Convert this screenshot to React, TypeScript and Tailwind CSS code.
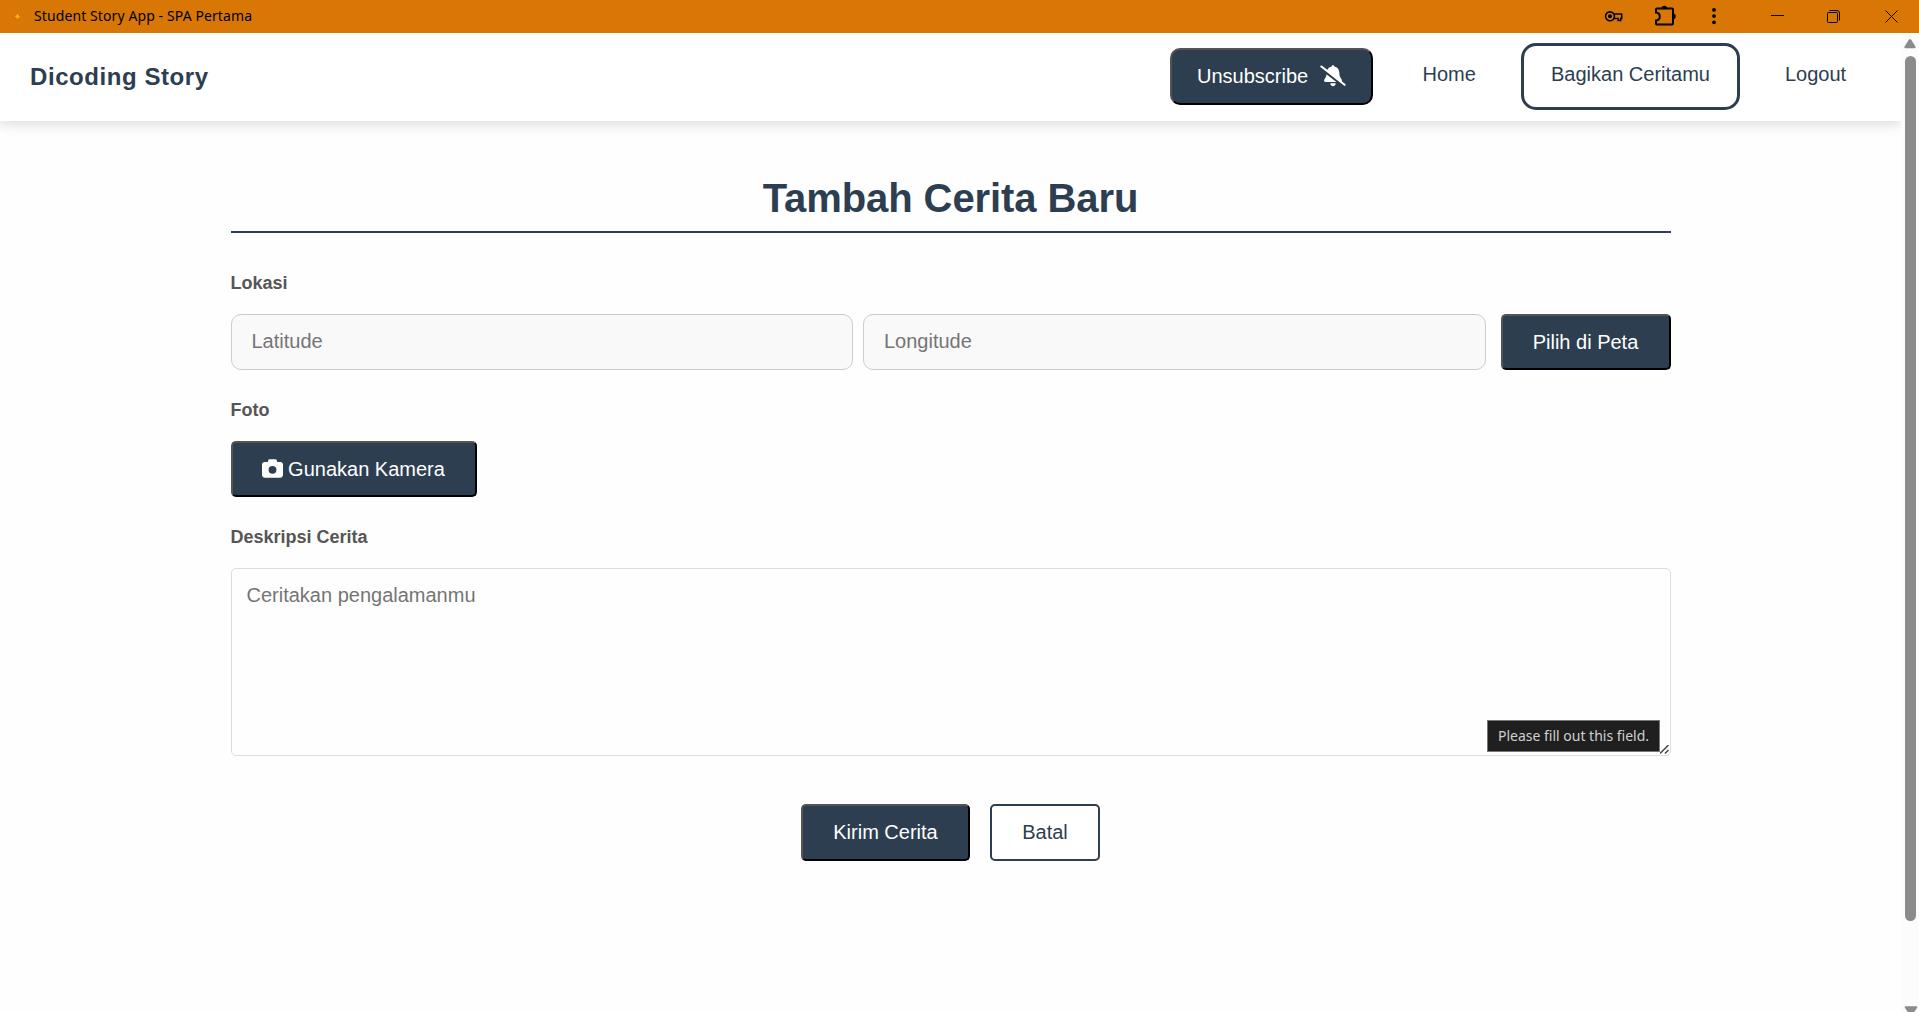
import React from "react";
import { FaCamera } from "react-icons/fa6";

const outset =
  "border-2 border-t-[#545454] border-l-[#545454] border-r-black border-b-black bg-[#2c3e50] text-white";

function TitleBar() {
  return (
    <div className="flex h-[33px] shrink-0 items-center bg-[#d87706] font-['Noto_Sans'] text-black">
      <svg className="ml-[9px] h-[17px] w-[17px]" viewBox="0 0 17 17">
        <circle cx="8.5" cy="8.5" r="7.5" fill="none" stroke="#e08310" strokeOpacity="0.6" strokeDasharray="3 2" />
        <path d="M8.500 6.300l.7 1.500 1.500.7-1.500.7-.7 1.500-.7-1.500-1.500-.7 1.500-.7z" fill="#fdb913" stroke="#fdb913" strokeWidth=".8" />
      </svg>
      <span className="ml-[8px] inline-block w-[219px] whitespace-nowrap pb-[2px] text-[14px] leading-[31px] tracking-[0.1px]">
        Student Story App - SPA Pertama
      </span>
      <svg className="ml-auto h-[33px] w-[315px]" viewBox="1604 0 315 33" fill="none" stroke="#000">
        <circle cx="1610" cy="16.3" r="4.4" strokeWidth="1.6" />
        <circle cx="1610" cy="16.3" r="2" fill="#000" stroke="none" />
        <path d="M1614 14.1h7.7v4.4h-1v2h-2.600v-2h-4.100" strokeWidth="1.500" />
        <path
          d="M1657.500 8.500H1672q1 0 1 1V23.500q0 1-1 1H1657q-1 0-1-1V20.500c5-.5 5-7.500 0-8V9.500q0-1 1-1z"
          strokeWidth="2"
        />
        <path d="M1661.500 8.500a2.800 2.800 0 0 1 5.600 0zM1673 13.500a2.800 2.800 0 0 1 0 5.600z" fill="#000" stroke="none" />
        <g fill="#000" stroke="none">
          <circle cx="1714" cy="9.900" r="1.900" />
          <circle cx="1714" cy="16.100" r="1.900" />
          <circle cx="1714" cy="22.300" r="1.900" />
        </g>
        <path d="M1771 15.500h13" />
        <rect x="1827.500" y="12.500" width="10" height="10" rx="1" />
        <path d="M1829.500 10.500h7.500q2.500 0 2.500 2.500v7.500" />
        <path d="M1885.500 10.500l12 12M1897.500 10.500l-12 12" />
      </svg>
    </div>
  );
}

function BellSlash() {
  return (
    <svg className="h-[22px] w-[26px]" viewBox="0 0 26 22" fill="#fff" strokeLinecap="round">
      <path d="M13 .3c.9 0 1.300.5 1.300 1.300 3 .6 5 3 5 6 0 3.400.9 4.900 2.200 6.700.9 1.300.3 2.700-1 2.700H5.500c-1.300 0-1.900-1.400-1-2.700 1.300-1.800 2.200-3.300 2.200-6.700 0-3 2-5.400 5-6 0-.8.4-1.300 1.300-1.300z" />
      <path d="M10.300 18.300h5.400c0 1.700-1.100 2.900-2.700 2.900s-2.700-1.200-2.700-2.900z" />
      <path d="M.5 3L23.500 21" stroke="#2c3e50" strokeWidth="2.400" />
      <path d="M1.400 1.500L24.600 19.800" stroke="#fff" strokeWidth="2.100" />
    </svg>
  );
}

function Header() {
  return (
    <header className="relative flex h-[88px] shrink-0 items-start bg-white pl-[30px] pr-[25px] text-[#2c3e50] shadow-[0_4px_12px_rgba(0,0,0,0.13)]">
      <div className="mt-[26px] text-[24px] leading-[36px] font-bold tracking-[0.57px]">Dicoding Story</div>
      <nav className="ml-auto flex items-start text-[20px] whitespace-nowrap">
        <button className={`${outset} mt-[15px] flex h-[57px] w-[203px] items-center rounded-[10px] pb-[2px] pl-[25px]`}>
          <span className="w-[123px] text-left">Unsubscribe</span>
          <BellSlash />
        </button>
        <a className="mt-[26px] ml-[49.5px] w-[54px] leading-[30px]">Home</a>
        <a className="mt-[10px] ml-[44.5px] h-[67px] w-[219px] rounded-[15px] border-3 border-[#2c3e50] pt-[13px] text-center leading-[30px]">
          Bagikan Ceritamu
        </a>
        <a className="mt-[26px] ml-[45px] w-[91px] leading-[30px]">Logout</a>
      </nav>
    </header>
  );
}

function Label({ children }: { children: React.ReactNode }) {
  return <label className="block h-[27px] pt-px text-[18px] leading-[27px] font-bold text-[#555]">{children}</label>;
}

const coordinate =
  "h-[56px] min-w-0 flex-1 rounded-[10px] border border-[#ccc] bg-[#f9f9f9] px-[20px] pb-[2px] placeholder:text-[#757575]";

function StoryForm() {
  return (
    <main className="mx-auto w-[1440px] text-[20px]">
      <h1 className="mt-[47px] h-[65px] border-b-2 border-[#2c3e50] text-center text-[40px] leading-[61px] font-bold tracking-[-0.08px] text-[#2c3e50]">
        Tambah Cerita Baru
      </h1>
      <div className="mt-[36px]">
        <Label>Lokasi</Label>
        <div className="mt-[18px] flex">
          <input className={coordinate} placeholder="Latitude" />
          <input className={`${coordinate} ml-[10px]`} placeholder="Longitude" />
          <button className={`${outset} ml-[15px] h-[56px] w-[170px] rounded-[5px]`}>Pilih di Peta</button>
        </div>
      </div>
      <div className="mt-[26px]">
        <Label>Foto</Label>
        <button className={`${outset} mt-[18px] flex h-[56px] w-[246px] items-center justify-center gap-[5px] rounded-[5px]`}>
          <FaCamera className="mb-px h-[21px] w-[21px]" />
          Gunakan Kamera
        </button>
      </div>
      <div className="mt-[26px]">
        <Label>Deskripsi Cerita</Label>
        <div className="relative mt-[18px] h-[188px]">
          <textarea
            className="block h-full w-full resize-none rounded-[5px] border border-[#ddd] px-[15px] py-[15px] leading-[23px] placeholder:text-[#757575]"
            placeholder="Ceritakan pengalamanmu"
          />
          <svg className="absolute right-[2px] bottom-[2px] h-[9px] w-[9px]" viewBox="0 0 9 9" stroke="#444" strokeWidth="1.500">
            <path d="M0 8.500L8.500 0M5 8.500L8.500 5" />
          </svg>
          <div className="absolute right-[10.5px] bottom-[4px] h-[32px] w-[173px] border border-[#767676] bg-[#1f1f1f] text-center font-['Noto_Sans'] text-[14px] leading-[29px] whitespace-nowrap text-[#d0d0d0]">
            Please fill out this field.
          </div>
        </div>
      </div>
      <div className="mt-[48px] flex justify-center gap-[20px]">
        <button className={`${outset} h-[57px] w-[169px] rounded-[5px] pb-[2px]`}>Kirim Cerita</button>
        <button className="h-[57px] w-[110px] rounded-[5px] border-2 border-[#2c3e50] bg-white pb-[2px] text-[#2c3e50]">
          Batal
        </button>
      </div>
    </main>
  );
}

function Scrollbar() {
  return (
    <div className="flex w-[18px] shrink-0 flex-col items-center overflow-hidden bg-[#fcfcfc]">
      <svg className="mt-[5px] h-[12px] w-[14px] shrink-0" viewBox="0 0 14 12" fill="#8b8b8b">
        <path d="M7 1q.7 0 1.200.8L12.500 8.500q.8 1.800-1 1.800h-9q-1.800 0-1-1.800L5.800 1.800Q6.300 1 7 1z" />
      </svg>
      <div className="mt-[6px] ml-px h-[865px] w-[11px] shrink-0 rounded-full bg-[#8b8b8b]" />
      <svg className="mt-[84px] ml-px h-[12px] w-[14px] shrink-0" viewBox="0 0 14 12" fill="#8b8b8b">
        <path d="M2 1.300h10q1.800.2 1 1.800L8.200 9.800Q7 11.300 5.800 9.800L1 3.100q-.8-1.600 1-1.800z" />
      </svg>
    </div>
  );
}

export default function App() {
  return (
    <div className="flex h-[1012px] w-[1919px] flex-col overflow-hidden bg-[#fefefe] font-['Liberation_Sans',Arial,sans-serif]">
      <TitleBar />
      <div className="flex h-[979px]">
        <div className="w-[1901px] overflow-hidden">
          <Header />
          <StoryForm />
        </div>
        <Scrollbar />
      </div>
    </div>
  );
}
